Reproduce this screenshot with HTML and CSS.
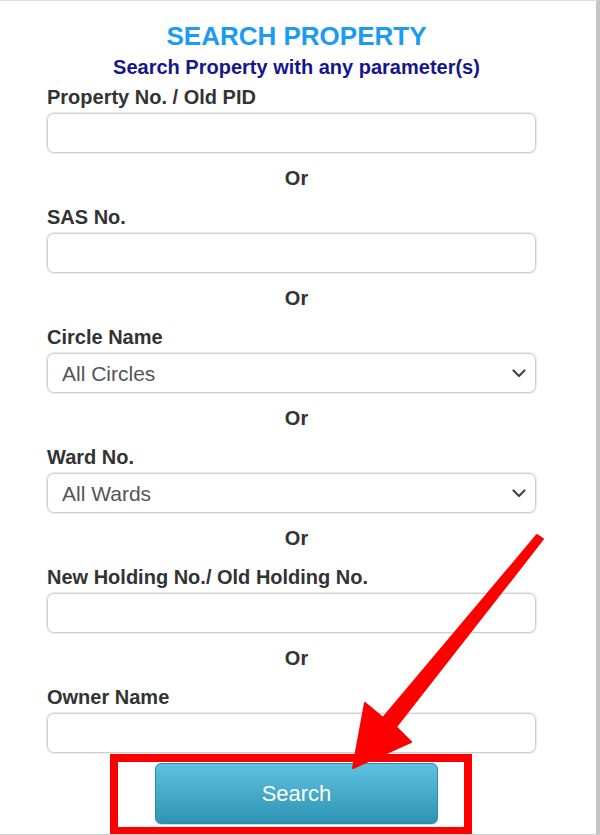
FILE: index.html
```html
<!DOCTYPE html>
<html lang="en">
<head>
<meta charset="utf-8">
<title>Search Property</title>
<link rel="stylesheet" href="styles.css">
</head>
<body>
<div class="page">
  <form class="form">
    <h1 class="title">SEARCH PROPERTY</h1>
    <p class="subtitle">Search Property with any parameter(s)</p>

    <div class="field">
      <label class="label">Property No. / Old PID</label>
      <input class="control" type="text">
    </div>
    <div class="or">Or</div>

    <div class="field">
      <label class="label">SAS No.</label>
      <input class="control" type="text">
    </div>
    <div class="or">Or</div>

    <div class="field">
      <label class="label">Circle Name</label>
      <div class="select-wrap">
        <select class="control select"><option>All Circles</option></select>
        <svg class="chevron" width="14" height="9" viewBox="0 0 14 9"><path d="M1.5 1.5 L7 7 L12.5 1.5" fill="none" stroke="#444" stroke-width="2.2" stroke-linecap="round" stroke-linejoin="round"/></svg>
      </div>
    </div>
    <div class="or">Or</div>

    <div class="field">
      <label class="label">Ward No.</label>
      <div class="select-wrap">
        <select class="control select"><option>All Wards</option></select>
        <svg class="chevron" width="14" height="9" viewBox="0 0 14 9"><path d="M1.5 1.5 L7 7 L12.5 1.5" fill="none" stroke="#444" stroke-width="2.2" stroke-linecap="round" stroke-linejoin="round"/></svg>
      </div>
    </div>
    <div class="or">Or</div>

    <div class="field">
      <label class="label">New Holding No./ Old Holding No.</label>
      <input class="control" type="text">
    </div>
    <div class="or">Or</div>

    <div class="field">
      <label class="label">Owner Name</label>
      <input class="control" type="text">
    </div>

    <div class="actions">
      <button class="btn" type="button">Search</button>
    </div>
  </form>

  <svg class="annot" width="600" height="835" viewBox="0 0 600 835">
    <rect x="114" y="757" width="354" height="73" fill="none" stroke="#ff0000" stroke-width="8"/>
    <path d="M537 534 L543 538 L396 726 L411 741 L353 767 L365 702 L383 717 Z" fill="#ff0000" stroke="#ff0000" stroke-width="2" stroke-linejoin="round"/>
  </svg>
</div>
</body>
</html>
```

FILE: styles.css
```css
html, body {
  margin: 0;
  padding: 0;
  background: #ffffff;
}

.page {
  position: relative;
  width: 600px;
  height: 835px;
  box-sizing: border-box;
  border-top: 1px solid #dcdcdc;
  border-bottom: 1px solid #cfcfcf;
  border-right: 4px solid #c6c6c6;
  overflow: hidden;
  font-family: "Liberation Sans", Arial, sans-serif;
}

.form {
  display: flex;
  flex-direction: column;
  padding: 20px 50px 0 47px;
  margin: 0;
}

.title {
  margin: 0;
  font-size: 26px;
  line-height: 30px;
  font-weight: bold;
  color: #1b9cf2;
  text-align: center;
}

.subtitle {
  margin: 5px 0 7px;
  font-size: 20px;
  line-height: 23px;
  font-weight: bold;
  color: #16168c;
  text-align: center;
}

.field {
  display: flex;
  flex-direction: column;
  gap: 4px;
  width: calc(100% - 10px);
}

.label {
  font-size: 20px;
  line-height: 23px;
  font-weight: bold;
  color: #333333;
}

.control {
  display: block;
  width: 100%;
  height: 40px;
  box-sizing: border-box;
  margin: 0;
  border: 1px solid #cfcfcf;
  border-radius: 7px;
  box-shadow: 0 0 0 1px #ededed;
  background: #ffffff;
  font-family: "Liberation Sans", Arial, sans-serif;
  font-size: 21px;
  color: #555555;
  padding: 0 14px;
  outline: none;
}

.select-wrap {
  position: relative;
}

.select {
  -webkit-appearance: none;
  appearance: none;
}

.chevron {
  position: absolute;
  right: 10px;
  top: 16px;
}

.or {
  margin: 14px 0 16px;
  font-size: 20px;
  line-height: 23px;
  font-weight: bold;
  color: #333333;
  text-align: center;
}

.actions {
  display: flex;
  justify-content: center;
  margin-top: 10px;
}

.btn {
  width: 283px;
  height: 61px;
  border: 1px solid #2b8fae;
  border-radius: 6px;
  background: linear-gradient(#5dc1df, #2f94b2);
  box-shadow: 0 1px 1px rgba(0, 0, 0, 0.15);
  color: #ffffff;
  font-family: "Liberation Sans", Arial, sans-serif;
  font-size: 22px;
  padding: 0;
}

.annot {
  position: absolute;
  left: 0;
  top: 0;
  pointer-events: none;
}
```
